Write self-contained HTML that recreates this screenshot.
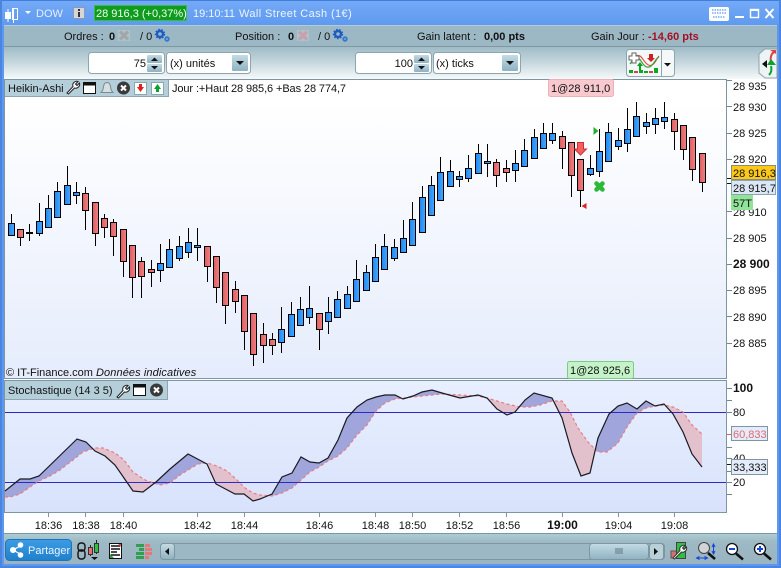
<!DOCTYPE html>
<html><head><meta charset="utf-8"><style>
html,body{margin:0;padding:0;background:#fff}
svg{display:block;position:absolute;left:0;top:0}
text{font-family:"Liberation Sans",Arial,sans-serif;font-size:11px;fill:#111;white-space:pre}
.m{text-anchor:middle}
</style></head><body>
<svg width="781" height="568" viewBox="0 0 781 568" xmlns="http://www.w3.org/2000/svg">
<defs>
<linearGradient id="tb" x1="0" y1="0" x2="0" y2="1"><stop offset="0" stop-color="#75aaf6"/><stop offset="1" stop-color="#5e9af0"/></linearGradient>
<linearGradient id="r3" x1="0" y1="0" x2="0" y2="1"><stop offset="0" stop-color="#9fbcc7"/><stop offset=".45" stop-color="#c4d6dc"/><stop offset="1" stop-color="#f8fbfc"/></linearGradient>
<linearGradient id="mp" x1="0" y1="0" x2="0" y2="1"><stop offset="0" stop-color="#fff"/><stop offset=".08" stop-color="#fff"/><stop offset="1" stop-color="#e5ecfc"/></linearGradient>
<linearGradient id="sp" x1="0" y1="0" x2="0" y2="1"><stop offset="0" stop-color="#e8efff"/><stop offset="1" stop-color="#d8e2fb"/></linearGradient>
<linearGradient id="bb" x1="0" y1="0" x2="0" y2="1"><stop offset="0" stop-color="#aecdd4"/><stop offset=".3" stop-color="#9db9c4"/><stop offset="1" stop-color="#9ab5c1"/></linearGradient>
<linearGradient id="b" x1="0" y1="0" x2="1" y2="0"><stop offset="0" stop-color="#1e86ee"/><stop offset="1" stop-color="#48a8ff"/></linearGradient>
<linearGradient id="r" x1="0" y1="0" x2="1" y2="0"><stop offset="0" stop-color="#dd5c60"/><stop offset="1" stop-color="#f08282"/></linearGradient>
<linearGradient id="btn" x1="0" y1="0" x2="0" y2="1"><stop offset="0" stop-color="#c4dbe4"/><stop offset="1" stop-color="#8eb2c2"/></linearGradient>
<linearGradient id="pb" x1="0" y1="0" x2="0" y2="1"><stop offset="0" stop-color="#3c9ce4"/><stop offset="1" stop-color="#1f80cc"/></linearGradient>
<clipPath id="aboveR"><polygon points="5,370 5,497 10,497 20,494 30,487 39,481 50,476 60,470 73,460 83,452 95,448 103,448 115,453 124,460 133,472 145,480 160,485 170,483 180,475 188,470 198,464 207,463 217,466 227,471 237,480 245,488 253,493 260,495 272,496 282,493 292,488 301,480 310,472 319,467 328,461 338,456 347,448 357,435 367,425 376,411 385,403 395,399 403,398 413,397 422,396 432,395 442,394 460,395 478,396 487,398 497,401 507,404 520,407 530,407 540,405 552,401 562,401 570,412 578,428 588,442 598,452 607,452 618,443 627,427 637,413 646,408 655,406 664,405 673,407 683,412 692,425 702,434 702,370"/></clipPath>
<clipPath id="aboveB"><polygon points="5,370 5,491 20,479 30,479 39,476 77,439 86,442 95,451 105,456 115,465 124,478 133,491 143,492 156,482 170,469 188,454 207,464 216,484 235,494 244,494 253,501 260,499 272,494 282,477 292,473 301,457 310,462 319,463 328,458 338,440 347,418 357,407 367,400 376,397 385,395 395,395 403,399 413,396 422,392 432,390 442,393 460,398 478,395 487,398 497,409 507,415 515,412 520,406 525,400 534,393 552,398 562,418 572,453 581,476 590,473 598,438 609,414 618,406 627,403 637,409 646,401 655,406 664,404 673,414 683,432 692,454 702,467 702,370"/></clipPath>
</defs>

<!-- frame -->
<rect width="781" height="568" fill="#5c98ee"/>
<rect x="0" y="0" width="781" height="25" fill="url(#tb)"/>
<rect x="0" y="0" width="781" height="1" fill="#3f7fdc"/>
<rect x="0" y="0" width="2" height="568" fill="#4a85e2"/>
<rect x="779" y="0" width="2" height="568" fill="#4a85e2"/>
<rect x="0" y="566" width="781" height="2" fill="#4a85e2"/>
<!-- row 2 / row 3 -->
<rect x="4" y="25" width="773" height="22" fill="#9cb8c4"/>
<rect x="4" y="25" width="773" height="1" fill="#b6ccd5"/>
<rect x="4" y="46" width="773" height="1" fill="#7f98a3"/>
<rect x="4" y="47" width="773" height="33" fill="url(#r3)"/>

<!-- title bar content -->
<g fill="#fff">
<rect x="5" y="12" width="6" height="7"/><rect x="7.500" y="9" width="1" height="13"/>
<rect x="13" y="8" width="1" height="15"/>
<rect x="12.500" y="8.500" width="5" height="11" fill="none" stroke="#fff"/>
<polygon points="25,11 31,11 28,14"/>
</g>
<text x="36" y="17" style="fill:#e4eeff">DOW</text>
<rect x="73.500" y="7.500" width="11" height="11" fill="#d6d6d6" stroke="#8a9ab8"/><rect x="78" y="9" width="2" height="2" fill="#333"/><rect x="78" y="12" width="2" height="5" fill="#333"/>
<rect x="94.500" y="5.500" width="92" height="15" fill="#0e9b1e" stroke="#3dbb4a"/>
<text x="96" y="17" style="fill:#f2fff3;font-weight:normal">28 916,3 (+0,37%)</text>
<text x="193" y="17" style="fill:#eef4ff">19:10:11</text>
<text x="239" y="17" style="fill:#eef4ff;letter-spacing:.4px">Wall Street Cash (1€)</text>
<rect x="709" y="7" width="20" height="14" rx="2" fill="#fff"/>
<path d="M712 10h14M712 13h14M713 17h12" stroke="#5c98ee" stroke-width="1.300" stroke-dasharray="1.500 1"/>
<rect x="735" y="16" width="9" height="2" fill="#fff"/>
<rect x="750.500" y="9.500" width="8" height="8" fill="none" stroke="#fff" stroke-width="1.400"/><rect x="750" y="9" width="9" height="2" fill="#fff"/>
<path d="M765.500 9L773.500 18M773.500 9L765.500 18" stroke="#fff" stroke-width="2"/>

<!-- row 2 text -->
<text x="64" y="40">Ordres :</text>
<text x="109" y="40" style="font-weight:bold">0</text>
<rect x="118" y="30" width="12" height="11" fill="#b0c2c9"/><path d="M120 31.500l8 8M128 31.500l-8 8" stroke="#a0a8aa" stroke-width="3.200"/>
<text x="140" y="40">/ 0</text>
<g fill="none"><circle cx="160" cy="34" r="3" stroke="#1f5bc4" stroke-width="2.400"/><circle cx="160" cy="34" r="4.500" stroke="#1f5bc4" stroke-width="1.400" stroke-dasharray="1.600 1.600"/><circle cx="167" cy="39" r="1.800" stroke="#2f78d0" stroke-width="1.800"/></g>
<text x="235" y="40">Position :</text>
<text x="288" y="40" style="font-weight:bold">0</text>
<rect x="297" y="30" width="12" height="11" fill="#b0c2c9"/><path d="M299 31.500l8 8M307 31.500l-8 8" stroke="#c9a0ae" stroke-width="3.200"/>
<text x="318" y="40">/ 0</text>
<g fill="none"><circle cx="338" cy="34" r="3" stroke="#1f5bc4" stroke-width="2.400"/><circle cx="338" cy="34" r="4.500" stroke="#1f5bc4" stroke-width="1.400" stroke-dasharray="1.600 1.600"/><circle cx="345" cy="39" r="1.800" stroke="#2f78d0" stroke-width="1.800"/></g>
<text x="417" y="40">Gain latent :</text>
<text x="484" y="40" style="font-weight:bold">0,00 pts</text>
<text x="591" y="40">Gain Jour :</text>
<text x="648" y="40" style="font-weight:bold;fill:#a31022">-14,60 pts</text>

<!-- row 3 controls -->
<rect x="88.500" y="52.500" width="76" height="21" rx="3" fill="#fff" stroke="#8ea4ae"/>
<text x="146" y="67" text-anchor="end">75</text>
<rect x="147" y="55" width="15" height="8" rx="1" fill="url(#btn)"/><rect x="147" y="64" width="15" height="8" rx="1" fill="url(#btn)"/>
<polygon points="151,61 158,61 154.500,57.500" fill="#111"/><polygon points="151,66 158,66 154.500,69.500" fill="#111"/>
<rect x="166.500" y="52.500" width="84" height="21" rx="3" fill="#fff" stroke="#8ea4ae"/>
<text x="170" y="67">(x) unités</text>
<rect x="232" y="55" width="16" height="16" rx="1" fill="url(#btn)"/><polygon points="236,61 244,61 240,65" fill="#111"/>

<rect x="355.500" y="52.500" width="76" height="21" rx="3" fill="#fff" stroke="#8ea4ae"/>
<text x="413" y="67" text-anchor="end">100</text>
<rect x="414" y="55" width="15" height="8" rx="1" fill="url(#btn)"/><rect x="414" y="64" width="15" height="8" rx="1" fill="url(#btn)"/>
<polygon points="418,61 425,61 421.500,57.500" fill="#111"/><polygon points="418,66 425,66 421.500,69.500" fill="#111"/>
<rect x="433.500" y="52.500" width="87" height="21" rx="3" fill="#fff" stroke="#8ea4ae"/>
<text x="436" y="67">(x) ticks</text>
<rect x="502" y="55" width="16" height="16" rx="1" fill="url(#btn)"/><polygon points="506,61 514,61 510,65" fill="#111"/>

<!-- strategy button -->
<rect x="626.500" y="49.500" width="48" height="27" rx="3" fill="#f4f8f8" stroke="#8ea4ae"/>
<rect x="661" y="50" width="1" height="26" fill="#8ea4ae"/>
<polygon points="664,63 671,63 667.500,66.500" fill="#111"/>
<path d="M631 60c4-5 8-6 11-2s6 9 10 7 4-6 7-9" fill="none" stroke="#e05050" stroke-width="1.200"/>
<path d="M630 64c4-6 8-8 11-3s6 8 10 5 4-7 8-9" fill="none" stroke="#30a030" stroke-width="1.200"/>
<path d="M629 56h3v-3h4v3h3v4h-3v3h-4v-3h-3z" fill="#fff" stroke="#666"/>
<polygon points="639,70 639,66 637,66 640,62 643,66 641,66 641,70" fill="#0aa020"/>
<polygon points="649,54 653,54 653,58 655,58 651,62 647,58 649,58" fill="#d02020"/>
<rect x="629" y="70" width="4" height="3" fill="#0aaa20"/><rect x="634" y="71" width="4" height="2" fill="#d84050"/><rect x="639" y="70" width="4" height="3" fill="#0aaa20"/><rect x="644" y="71" width="4" height="2" fill="#0aaa20"/><rect x="649" y="71" width="4" height="2" fill="#d84050"/><rect x="654" y="68" width="4" height="5" fill="#0aaa20"/>

<!-- right tab -->
<path d="M777 49h-12l-6 5v19l6 5h12z" fill="#eef3f5" stroke="#8ea4ae"/>
<polygon points="762,64 767,60 767,68" fill="#111"/>
<path d="M771 62c-1-4 0-8 3-10" fill="none" stroke="#e04040" stroke-width="2"/><polygon points="770,50 776,50 776,54" fill="#e04040"/>
<path d="M771 66c1 4 0 7-2 9" fill="none" stroke="#10a030" stroke-width="2"/><polygon points="767,65 776,65 771,59" fill="#10a030"/>

<!-- main panel -->
<rect x="4" y="79" width="773" height="454" fill="#fff"/>
<rect x="5" y="80" width="721" height="298" fill="url(#mp)"/>
<path d="M4.500 79.500H726.500V378.500H4.500z" fill="none" stroke="#7e96a1"/>
<!-- axis ticks -->
<path d="M727 80.500h5M727 106.500h5M727 133.500h5M727 159.500h5M727 211.500h5M727 238.500h5M727 264.500h5M727 290.500h5M727 316.500h5M727 343.500h5" stroke="#6f8792"/>
<path d="M727 178.500h5M727 183.500h5" stroke="#111"/>
<text x="733" y="90">28 935</text>
<text x="733" y="111">28 930</text>
<text x="733" y="137">28 925</text>
<text x="733" y="163">28 920</text>
<text x="733" y="216">28 910</text>
<text x="733" y="242">28 905</text>
<text x="733" y="268" style="font-weight:bold;font-size:12px">28 900</text>
<text x="733" y="294">28 895</text>
<text x="733" y="321">28 890</text>
<text x="733" y="347">28 885</text>
<rect x="731.500" y="165.500" width="44" height="14" fill="#fcc81a" stroke="#8c8c70"/>
<text x="733" y="177">28 916,3</text>
<rect x="731.500" y="180.500" width="44" height="14" fill="#dce7f5" stroke="#8ea4ae"/>
<text x="733" y="192">28 915,7</text>
<rect x="731" y="195" width="22" height="15" fill="#90e398"/>
<text x="733" y="207">57T</text>

<!-- candles -->
<path stroke="#000" stroke-width="1" fill="none" d="M11.500 214V236M20.500 229V246M29.500 224V241M39.500 203V236M48.500 195V228M57.500 182V218M67.500 166V205M76.500 182V204M85.500 187V230M95.500 202V246M104.500 214V238M113.500 219V256M123.500 229V277M132.500 245V298M141.500 257V298M151.500 260V287M160.500 244V282M169.500 239V268M179.500 236V261M188.500 228V258M197.500 228V261M207.500 246V282M216.500 256V303M225.500 272V324M235.500 281V313M244.500 295V350M253.500 313V366M263.500 323V363M272.500 333V355M281.500 307V353M291.500 302V337M300.500 297V326M309.500 286V324M319.500 313V350M328.500 297V334M337.500 291V318M347.500 286V309M356.500 260V302M366.500 265V291M375.500 244V282M384.500 234V270M394.500 239V261M403.500 220V253M412.500 202V246M422.500 186V233M431.500 176V216M440.500 157V201M450.500 160V187M459.500 171V187M468.500 155V182M478.500 144V174M487.500 144V177M496.500 159V187M506.500 160V182M515.500 150V182M524.500 139V167M534.500 129V159M543.500 123V149M552.500 123V144M562.500 131V169M571.500 142V197M580.500 159V207M590.500 155V176M599.500 129V177M608.500 123V162M618.500 128V150M627.500 108V152M636.500 102V137M646.500 113V134M655.500 108V134M664.500 102V129M674.500 113V150M683.500 125V160M692.500 137V181M702.500 153V192"/>
<rect x="26" y="232" width="7" height="2" fill="#000"/>
<g fill="url(#b)" stroke="#000" stroke-width="1">
<rect x="8.500" y="223.500" width="6" height="12"/>
<rect x="36.500" y="221.500" width="6" height="12"/>
<rect x="45.500" y="208.500" width="6" height="19"/>
<rect x="54.500" y="191.500" width="6" height="26"/>
<rect x="64.500" y="185.500" width="6" height="19"/>
<rect x="73.500" y="192.500" width="6" height="3"/>
<rect x="157.500" y="263.500" width="6" height="7"/>
<rect x="166.500" y="249.500" width="6" height="18"/>
<rect x="176.500" y="246.500" width="6" height="12"/>
<rect x="185.500" y="242.500" width="6" height="10"/>
<rect x="194.500" y="245.500" width="6" height="2"/>
<rect x="278.500" y="329.500" width="6" height="13"/>
<rect x="288.500" y="314.500" width="6" height="22"/>
<rect x="297.500" y="309.500" width="6" height="16"/>
<rect x="306.500" y="308.500" width="6" height="9"/>
<rect x="325.500" y="312.500" width="6" height="9"/>
<rect x="334.500" y="299.500" width="6" height="18"/>
<rect x="344.500" y="294.500" width="6" height="14"/>
<rect x="353.500" y="279.500" width="6" height="22"/>
<rect x="363.500" y="272.500" width="6" height="18"/>
<rect x="372.500" y="257.500" width="6" height="24"/>
<rect x="381.500" y="246.500" width="6" height="23"/>
<rect x="391.500" y="247.500" width="6" height="11"/>
<rect x="400.500" y="238.500" width="6" height="14"/>
<rect x="409.500" y="219.500" width="6" height="26"/>
<rect x="419.500" y="197.500" width="6" height="35"/>
<rect x="428.500" y="185.500" width="6" height="30"/>
<rect x="437.500" y="172.500" width="6" height="28"/>
<rect x="447.500" y="171.500" width="6" height="15"/>
<rect x="456.500" y="176.500" width="6" height="3"/>
<rect x="465.500" y="168.500" width="6" height="10"/>
<rect x="475.500" y="153.500" width="6" height="20"/>
<rect x="484.500" y="161.500" width="6" height="2"/>
<rect x="512.500" y="163.500" width="6" height="7"/>
<rect x="521.500" y="150.500" width="6" height="16"/>
<rect x="531.500" y="137.500" width="6" height="21"/>
<rect x="540.500" y="133.500" width="6" height="15"/>
<rect x="549.500" y="133.500" width="6" height="7"/>
<rect x="587.500" y="168.500" width="6" height="6"/>
<rect x="596.500" y="151.500" width="6" height="20"/>
<rect x="605.500" y="132.500" width="6" height="29"/>
<rect x="615.500" y="140.500" width="6" height="6"/>
<rect x="624.500" y="129.500" width="6" height="14"/>
<rect x="633.500" y="116.500" width="6" height="20"/>
<rect x="643.500" y="122.500" width="6" height="4"/>
<rect x="652.500" y="118.500" width="6" height="6"/>
<rect x="661.500" y="117.500" width="6" height="4"/>
</g>
<g fill="url(#r)" stroke="#000" stroke-width="1">
<rect x="17.500" y="229.500" width="6" height="8"/>
<rect x="82.500" y="193.500" width="6" height="17"/>
<rect x="92.500" y="202.500" width="6" height="31"/>
<rect x="101.500" y="218.500" width="6" height="9"/>
<rect x="110.500" y="222.500" width="6" height="14"/>
<rect x="120.500" y="229.500" width="6" height="32"/>
<rect x="129.500" y="245.500" width="6" height="32"/>
<rect x="138.500" y="261.500" width="6" height="15"/>
<rect x="148.500" y="269.500" width="6" height="3"/>
<rect x="204.500" y="246.500" width="6" height="20"/>
<rect x="213.500" y="256.500" width="6" height="31"/>
<rect x="222.500" y="272.500" width="6" height="33"/>
<rect x="232.500" y="289.500" width="6" height="12"/>
<rect x="241.500" y="295.500" width="6" height="36"/>
<rect x="250.500" y="313.500" width="6" height="41"/>
<rect x="260.500" y="334.500" width="6" height="11"/>
<rect x="269.500" y="339.500" width="6" height="6"/>
<rect x="316.500" y="313.500" width="6" height="16"/>
<rect x="493.500" y="162.500" width="6" height="13"/>
<rect x="503.500" y="168.500" width="6" height="4"/>
<rect x="559.500" y="136.500" width="6" height="12"/>
<rect x="568.500" y="142.500" width="6" height="33"/>
<rect x="577.500" y="159.500" width="6" height="31"/>
<rect x="671.500" y="119.500" width="6" height="12"/>
<rect x="680.500" y="125.500" width="6" height="24"/>
<rect x="689.500" y="137.500" width="6" height="32"/>
<rect x="699.500" y="153.500" width="6" height="29"/>
</g>
<!-- markers -->
<polygon points="577.500,142.500 583.500,142.500 583.500,149 586.500,149 580.500,155 574.500,149 577.500,149" fill="#f06060" stroke="#d03030" stroke-width="1"/>
<polygon points="593.500,127 598.500,131 593.500,135" fill="#22b030"/>
<polygon points="586.500,203 581.500,206 586.500,209" fill="#e02020"/>
<path d="M596.500 183.500l6 6M602.500 183.500l-6 6" stroke="#2db83a" stroke-width="4.500" stroke-linecap="round"/>

<!-- header label main -->
<rect x="5" y="80" width="163" height="16" fill="#b5cfda"/>
<path d="M5 96.500H168.500V80" fill="none" stroke="#8ea4ae"/>
<text x="8" y="92">Heikin-Ashi</text>
<path d="M67 93l6-6.500a3.500 3.500 0 0 1 1.500-4.500 4 4 0 0 1 3.500-.5l-2.500 2.500 1.500 1.500 2.500-2.500a4 4 0 0 1-5 5l-6 6z" fill="#fff" stroke="#222"/>
<rect x="83.500" y="82.500" width="12" height="11" fill="#fff" stroke="#111"/><rect x="83" y="82" width="13" height="3.500" fill="#111"/>
<path d="M101 92.500h12c-2-2-2-3-2.500-6-.5-3-2-4-3.500-4s-3 1-3.500 4c-.5 3-.5 4-2.500 6z" fill="#d6dfe2" stroke="#7c8a90"/>
<circle cx="123.500" cy="88" r="6.500" fill="#3a3a3a"/><path d="M121 85.500l5 5M126 85.500l-5 5" stroke="#fff" stroke-width="2"/>
<rect x="134.500" y="82.500" width="12" height="12" fill="#fff" stroke="#8aa"/><polygon points="137,87 144,87 140.500,92" fill="#e02020"/><rect x="139" y="84" width="3" height="4" fill="#e02020"/>
<rect x="151.500" y="82.500" width="12" height="12" fill="#fff" stroke="#8aa"/><polygon points="154,89 161,89 157.500,84" fill="#10a030"/><rect x="156" y="88" width="3" height="4" fill="#10a030"/>
<text x="172" y="92" style="letter-spacing:-.1px">Jour :+Haut 28 985,6 +Bas 28 774,7</text>

<rect x="548.500" y="79.500" width="65" height="17" rx="2" fill="#f8c9cf" stroke="#eeb0b8"/>
<text x="551" y="92">1@28 911,0</text>
<text x="6" y="376">© IT-Finance.com</text>
<text x="96" y="376" style="font-style:italic;letter-spacing:.1px">Données indicatives</text>
<rect x="567.500" y="361.500" width="66" height="17" rx="2" fill="#c5f3c8" stroke="#7ecb88"/>
<text x="570" y="374">1@28 925,6</text>

<!-- stochastic pane -->
<rect x="5" y="381" width="721" height="131" fill="url(#sp)"/>
<path d="M4.500 380.500H726.500V512.500H4.500z" fill="none" stroke="#7e96a1"/>
<g clip-path="url(#aboveR)"><polygon fill="#a0a6dc" points="5,520 5,491 20,479 30,479 39,476 77,439 86,442 95,451 105,456 115,465 124,478 133,491 143,492 156,482 170,469 188,454 207,464 216,484 235,494 244,494 253,501 260,499 272,494 282,477 292,473 301,457 310,462 319,463 328,458 338,440 347,418 357,407 367,400 376,397 385,395 395,395 403,399 413,396 422,392 432,390 442,393 460,398 478,395 487,398 497,409 507,415 515,412 520,406 525,400 534,393 552,398 562,418 572,453 581,476 590,473 598,438 609,414 618,406 627,403 637,409 646,401 655,406 664,404 673,414 683,432 692,454 702,467 702,520"/></g>
<g clip-path="url(#aboveB)"><polygon fill="#e2c1cd" points="5,520 5,497 10,497 20,494 30,487 39,481 50,476 60,470 73,460 83,452 95,448 103,448 115,453 124,460 133,472 145,480 160,485 170,483 180,475 188,470 198,464 207,463 217,466 227,471 237,480 245,488 253,493 260,495 272,496 282,493 292,488 301,480 310,472 319,467 328,461 338,456 347,448 357,435 367,425 376,411 385,403 395,399 403,398 413,397 422,396 432,395 442,394 460,395 478,396 487,398 497,401 507,404 520,407 530,407 540,405 552,401 562,401 570,412 578,428 588,442 598,452 607,452 618,443 627,427 637,413 646,408 655,406 664,405 673,407 683,412 692,425 702,434 702,520"/></g>
<path d="M5 412.500H726M5 482.500H726" stroke="#2a2ac4" stroke-width="1"/>
<polyline fill="none" stroke="#ea7c80" stroke-width="1.200" stroke-dasharray="3 2.500" points="5,497 10,497 20,494 30,487 39,481 50,476 60,470 73,460 83,452 95,448 103,448 115,453 124,460 133,472 145,480 160,485 170,483 180,475 188,470 198,464 207,463 217,466 227,471 237,480 245,488 253,493 260,495 272,496 282,493 292,488 301,480 310,472 319,467 328,461 338,456 347,448 357,435 367,425 376,411 385,403 395,399 403,398 413,397 422,396 432,395 442,394 460,395 478,396 487,398 497,401 507,404 520,407 530,407 540,405 552,401 562,401 570,412 578,428 588,442 598,452 607,452 618,443 627,427 637,413 646,408 655,406 664,405 673,407 683,412 692,425 702,434"/>
<polyline fill="none" stroke="#1a1a22" stroke-width="1.200" points="5,491 20,479 30,479 39,476 77,439 86,442 95,451 105,456 115,465 124,478 133,491 143,492 156,482 170,469 188,454 207,464 216,484 235,494 244,494 253,501 260,499 272,494 282,477 292,473 301,457 310,462 319,463 328,458 338,440 347,418 357,407 367,400 376,397 385,395 395,395 403,399 413,396 422,392 432,390 442,393 460,398 478,395 487,398 497,409 507,415 515,412 520,406 525,400 534,393 552,398 562,418 572,453 581,476 590,473 598,438 609,414 618,406 627,403 637,409 646,401 655,406 664,404 673,414 683,432 692,454 702,467"/>
<!-- stoch header -->
<rect x="5" y="381" width="162" height="18" fill="#b5cfda"/>
<path d="M5 399.500H167.500V381" fill="none" stroke="#8ea4ae"/>
<text x="8" y="394">Stochastique (14 3 5)</text>
<path d="M117 397l6-6.500a3.500 3.500 0 0 1 1.500-4.500 4 4 0 0 1 3.500-.5l-2.500 2.500 1.500 1.500 2.500-2.500a4 4 0 0 1-5 5l-6 6z" fill="#fff" stroke="#222"/>
<rect x="133.500" y="384.500" width="12" height="11" fill="#fff" stroke="#111"/><rect x="133" y="384" width="13" height="3.500" fill="#111"/>
<circle cx="156.500" cy="390" r="6.500" fill="#3a3a3a"/><path d="M154 387.500l5 5M159 387.500l-5 5" stroke="#fff" stroke-width="2"/>
<!-- stoch axis -->
<path d="M727 388.500h5M727 400.500h5M727 412.500h5M727 447.500h5M727 458.500h5M727 471.500h5M727 482.500h5M727 494.500h5" stroke="#6f8792"/>
<path d="M727 434.500h5" stroke="#e06060"/><path d="M727 464.500h5" stroke="#111"/>
<text x="733" y="392" style="font-weight:bold;font-size:12px">100</text>
<text x="733" y="416">80</text>
<text x="733" y="462">40</text>
<text x="733" y="486">20</text>
<rect x="731.500" y="426.500" width="36" height="14" fill="#e4ecfb" stroke="#7e96a1"/>
<text x="733" y="438" style="fill:#e46a70">60,833</text>
<rect x="731.500" y="459.500" width="36" height="15" fill="#e4ecfb" stroke="#7e96a1"/>
<text x="733" y="471">33,333</text>

<!-- x axis -->
<path d="M48.500 513v4M85.500 513v4M123.500 513v4M197.500 513v4M244.500 513v4M319.500 513v4M375.500 513v4M412.500 513v4M459.500 513v4M506.500 513v4M562.500 513v4M618.500 513v4M674.500 513v4" stroke="#7e96a1"/>
<g>
<text class="m" x="48.500" y="529">18:36</text>
<text class="m" x="86" y="529">18:38</text>
<text class="m" x="123.500" y="529">18:40</text>
<text class="m" x="197.500" y="529">18:42</text>
<text class="m" x="244.500" y="529">18:44</text>
<text class="m" x="319.500" y="529">18:46</text>
<text class="m" x="375.500" y="529">18:48</text>
<text class="m" x="412.500" y="529">18:50</text>
<text class="m" x="459.500" y="529">18:52</text>
<text class="m" x="506.500" y="529">18:56</text>
<text class="m" x="562.500" y="529" style="font-weight:bold;font-size:12px">19:00</text>
<text class="m" x="618.500" y="529">19:04</text>
<text class="m" x="674.500" y="529">19:08</text>
</g>

<!-- bottom bar -->
<rect x="4" y="533" width="773" height="31" fill="url(#bb)"/>
<rect x="4" y="533" width="773" height="1" fill="#7e96a1"/>
<rect x="5.500" y="539.500" width="66" height="21" rx="4" fill="url(#pb)" stroke="#1d74c0"/>
<path d="M13 550l9-5M13 550l9 5" stroke="#fff" stroke-width="1.200"/>
<circle cx="13" cy="550" r="3" fill="#fff"/><circle cx="20.500" cy="545" r="2.800" fill="#fff"/><circle cx="20.500" cy="555" r="2.800" fill="#fff"/>
<text x="28" y="554" style="fill:#eaf4ff">Partager</text>
<rect x="78" y="543" width="7" height="8" rx="3" fill="none" stroke="#111" stroke-width="1.400"/><rect x="78" y="550" width="7" height="9" rx="3" fill="none" stroke="#111" stroke-width="1.400"/>
<path d="M90.500 545v11M96.500 540v14" stroke="#222"/>
<rect x="88.500" y="547.500" width="4" height="7" fill="#ef6a6a" stroke="#333"/>
<rect x="94.500" y="543.500" width="4" height="9" fill="#30c040" stroke="#333"/>
<polygon points="91,557 98,557 94.500,560" fill="#111"/>
<rect x="109.500" y="543.500" width="12" height="15" fill="#fff" stroke="#111"/>
<path d="M111 546h9M111 549h9M111 552h6M111 555h9" stroke="#111" stroke-width="1.400"/>
<polygon points="118,544 121,544 121,547" fill="#e05050"/><polygon points="110,558 114,558 110,554" fill="#30a040"/>
<g fill="#30a050"><rect x="136" y="544" width="8" height="3"/><rect x="136" y="552" width="8" height="3"/><rect x="136" y="556" width="8" height="3"/><rect x="139" y="548" width="5" height="3"/></g>
<g fill="#e87878"><rect x="145" y="544" width="5" height="3"/><rect x="145" y="548" width="7" height="3"/><rect x="145" y="552" width="7" height="3"/><rect x="145" y="556" width="4" height="3"/></g>

<!-- scrollbar -->
<rect x="160.500" y="543.500" width="504" height="16" rx="3" fill="#9cb8c4" stroke="#7e96a1"/>
<rect x="160.500" y="543.500" width="14" height="16" rx="3" fill="url(#btn)" stroke="#7e96a1"/>
<polygon points="169,548 169,555 165,551.500" fill="#111"/>
<rect x="589.500" y="543.500" width="59" height="16" rx="3" fill="url(#btn)" stroke="#7e96a1"/>
<path d="M615 549h8M615 551h8M615 553h8" stroke="#5e7783"/>
<rect x="649.500" y="543.500" width="14" height="16" rx="3" fill="#b8d1d9" stroke="#7e96a1"/>
<polygon points="654,548 654,555 658,551.500" fill="#111"/>

<!-- right tools -->
<rect x="671" y="551" width="6" height="7" fill="#d87070" stroke="#555"/>
<rect x="676.500" y="542.500" width="9" height="16" fill="#2ec040" stroke="#444"/>
<path d="M673 558l7-7.500a3.500 3.500 0 0 1 1.500-4.500 4 4 0 0 1 3.500-.5l-2.500 2.500 1.500 1.500 2.500-2.500a4 4 0 0 1-5 5l-7 7z" fill="#fff" stroke="#333"/>
<circle cx="704" cy="548" r="5.500" fill="#d0d4d6" stroke="#444"/><path d="M708 553l7 6" stroke="#111" stroke-width="2.500"/>
<path d="M713.500 545v8M712 547l1.500-3 1.500 3M712 551l1.500 3 1.500-3M698 558h8M699.500 556.500l-3 1.500 3 1.500M704.500 556.500l3 1.500-3 1.500" stroke="#1545e0" fill="none"/>
<circle cx="732" cy="549" r="5.500" fill="#fff" stroke="#111" stroke-width="1.300"/><path d="M729 549h6" stroke="#1545e0" stroke-width="2"/><path d="M736 553.500l7 6" stroke="#111" stroke-width="2.500"/>
<circle cx="760" cy="549" r="5.500" fill="#fff" stroke="#111" stroke-width="1.300"/><path d="M757 549h6M760 546v6" stroke="#1545e0" stroke-width="2"/><path d="M764 553.500l7 6" stroke="#111" stroke-width="2.500"/>
</svg>
</body></html>
